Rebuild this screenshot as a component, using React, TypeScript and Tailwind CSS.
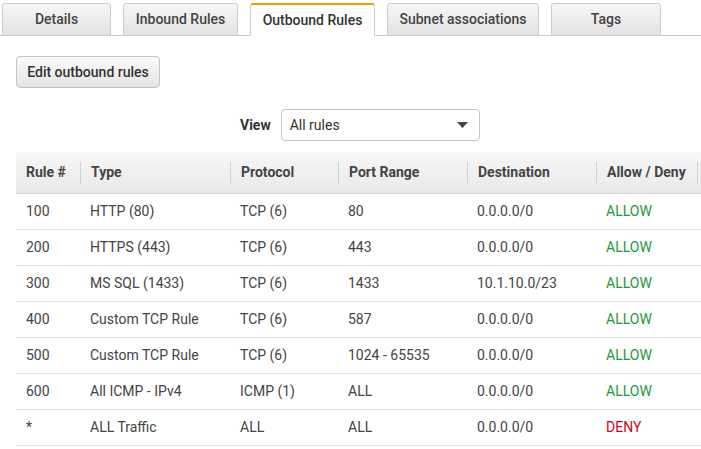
import React from "react";

const tabs = [
  { label: "Details", w: "w-[109px]" },
  { label: "Inbound Rules", w: "w-[115px]" },
  { label: "Outbound Rules", w: "w-[125px]", active: true },
  { label: "Subnet associations", w: "w-[152px]" },
  { label: "Tags", w: "w-[110px]" },
];

const cols = ["w-[64px]", "w-[150px]", "w-[108px]", "w-[129px]", "w-[129px]", "w-[101px]", "w-[60px]"];
const headers = ["Rule #", "Type", "Protocol", "Port Range", "Destination", "Allow / Deny", ""];

const rows = [
  ["100", "HTTP (80)", "TCP (6)", "80", "0.0.0.0/0", "ALLOW"],
  ["200", "HTTPS (443)", "TCP (6)", "443", "0.0.0.0/0", "ALLOW"],
  ["300", "MS SQL (1433)", "TCP (6)", "1433", "10.1.10.0/23", "ALLOW"],
  ["400", "Custom TCP Rule", "TCP (6)", "587", "0.0.0.0/0", "ALLOW"],
  ["500", "Custom TCP Rule", "TCP (6)", "1024 - 65535", "0.0.0.0/0", "ALLOW"],
  ["600", "All ICMP - IPv4", "ICMP (1)", "ALL", "0.0.0.0/0", "ALLOW"],
  ["*", "ALL Traffic", "ALL", "ALL", "0.0.0.0/0", "DENY"],
];

export default function App() {
  return (
    <div className="w-[701px] h-[449px] bg-white overflow-hidden text-[14px] text-[#444] font-['Roboto',sans-serif]">
      {/* Tabs */}
      <div className="flex items-end h-[36px] border-b border-[#ccc] pl-[2px] gap-[12px]">
        {tabs.map((t) =>
          t.active ? (
            <div
              key={t.label}
              className={`${t.w} h-[33px] -mb-px flex items-center justify-center bg-white border border-[#ccc] border-t-[2px] border-t-[#f90] border-b-white rounded-t-[3px] font-medium text-[#333]`}
            >
              {t.label}
            </div>
          ) : (
            <div
              key={t.label}
              className={`${t.w} h-[33px] -mb-px flex items-center justify-center bg-gradient-to-b from-[#f6f6f6] to-[#e3e3e3] border border-[#ccc] rounded-t-[3px] font-medium text-[#444]`}
            >
              {t.label}
            </div>
          )
        )}
      </div>

      {/* Edit button */}
      <div className="pl-[16px] pt-[20px]">
        <button className="w-[144px] h-[32px] rounded-[4px] border border-[#c4c4c4] bg-gradient-to-b from-[#fafafa] to-[#e4e4e4] font-medium text-[#333] text-[14px] flex items-center justify-center">
          Edit outbound rules
        </button>
      </div>

      {/* View select */}
      <div className="flex items-center pt-[21px] pl-[240px] gap-[10px]">
        <span className="font-bold text-[#333]">View</span>
        <div className="w-[199px] h-[32px] border border-[#c4c4c4] rounded-[4px] bg-white flex items-center justify-between pl-[8px] pr-[11px] text-[#333]">
          <span>All rules</span>
          <svg width="11" height="6" viewBox="0 0 11 6">
            <path d="M0 0 L11 0 L5.5 6 Z" fill="#444" />
          </svg>
        </div>
      </div>

      {/* Table */}
      <div className="ml-[16px] mt-[11px] w-[685px] overflow-hidden">
        <div className="flex w-[741px] h-[42px] bg-gradient-to-b from-[#f7f7f7] to-[#e9e9e9] border-b border-[#cfcfcf]">
          {headers.map((h, i) => (
            <div key={i} className={`${cols[i]} shrink-0 flex items-center`}>
              {i > 0 && <div className="h-[22px] border-l border-[#d0d0d0]" />}
              <span className="font-bold text-[#444] pl-[10px]">{h}</span>
            </div>
          ))}
        </div>
        {rows.map((r, ri) => (
          <div key={ri} className="flex w-[741px] h-[36px] border-b border-[#e0e0e0]">
            {r.map((c, ci) => (
              <div
                key={ci}
                className={`${cols[ci]} shrink-0 flex items-center pl-[10px] ${
                  ci === 5 ? (c === "DENY" ? "text-[#d0021b]" : "text-[#1d9a3a]") : "text-[#444]"
                }`}
              >
                {c}
              </div>
            ))}
          </div>
        ))}
      </div>
    </div>
  );
}
